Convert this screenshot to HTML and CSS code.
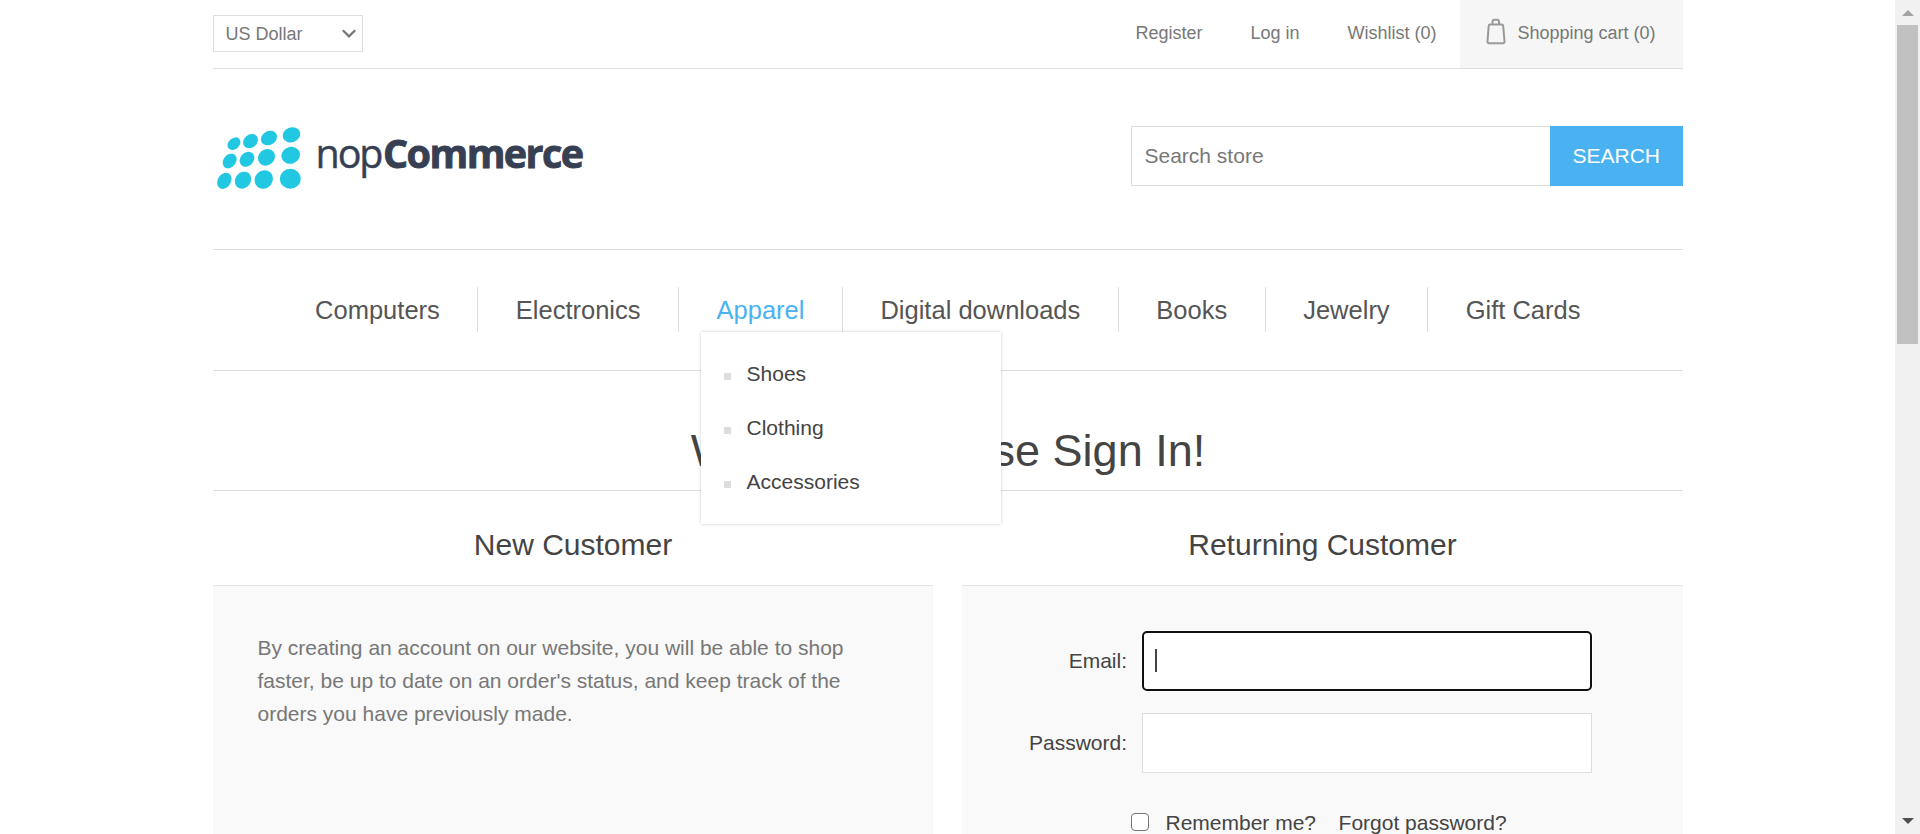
FILE: index.html
```html
<!DOCTYPE html>
<html lang="en">
<head>
<meta charset="utf-8">
<title>nopCommerce demo store. Login</title>
<link rel="stylesheet" href="styles.css">
</head>
<body>
<div class="viewport">
  <div class="page">
    <header class="topbar">
      <div class="currency">US Dollar
        <svg class="chevron" viewBox="0 0 14 9"><path d="M.8 1.200 7 7.400l6.200-6.200" fill="none" stroke="#767676" stroke-width="2.200"/></svg>
      </div>
      <nav class="links">
        <a>Register</a><a>Log in</a><a>Wishlist (0)</a>
        <a class="cart"><svg class="bag" viewBox="0 0 20 27"><path d="M6.500 6V4Q6.500 1.800 8.500 1.800h2.500Q13 1.800 13 4V6M4 6.500h11.500Q17 6.500 17.200 8L18.500 23.300Q18.700 25.200 17 25.200h-14Q1.300 25.200 1.500 23.300L2.700 8Q2.800 6.500 4 6.500Z" fill="none" stroke="#999" stroke-width="2"/></svg>Shopping cart (0)</a>
      </nav>
    </header>
    <div class="masthead">
      <svg class="logo" viewBox="0 0 375 75">
        <g fill="#22c8e2">
          <ellipse cx="24" cy="23.700" rx="7.200" ry="5.500" transform="translate(-3 0) rotate(-43 24 23.700)"/>
          <ellipse cx="37.500" cy="21.200" rx="8" ry="6.500" transform="rotate(-40 37.500 21.200)"/>
          <ellipse cx="56" cy="18" rx="8.500" ry="6.800" transform="rotate(-30 56 18)"/>
          <ellipse cx="78.500" cy="14.800" rx="9" ry="7.400" transform="rotate(-20 78.500 14.800)"/>
          <ellipse cx="16.700" cy="41" rx="8" ry="6.200" transform="rotate(-50 16.700 41)"/>
          <ellipse cx="34" cy="39.300" rx="8.200" ry="6.700" transform="rotate(-47 34 39.300)"/>
          <ellipse cx="53.500" cy="37.300" rx="9" ry="7.900" transform="rotate(-40 53.500 37.300)"/>
          <ellipse cx="77.700" cy="35.300" rx="9.500" ry="8.400" transform="rotate(-20 77.700 35.300)"/>
          <ellipse cx="11.300" cy="60.800" rx="8.600" ry="6.600" transform="rotate(-57 11.300 60.800)"/>
          <ellipse cx="30" cy="60.200" rx="9" ry="7.700" transform="rotate(-52 30 60.200)"/>
          <ellipse cx="50.800" cy="59.500" rx="9.600" ry="8.800" transform="rotate(-48 50.800 59.500)"/>
          <ellipse cx="77.300" cy="58.800" rx="10.500" ry="10"/>
        </g>
        <text class="logo-text" x="102.500" y="48.200" textLength="68" lengthAdjust="spacing">nop</text>
        <text class="logo-text strong" x="170" y="48" textLength="201" lengthAdjust="spacing">Commerce</text>
      </svg>
      <div class="search"><div class="search-field">Search store</div><div class="search-button">SEARCH</div></div>
    </div>
    <nav class="menu">
      <a>Computers</a><a>Electronics</a>
      <div class="menu-item active">Apparel
        <ul class="submenu"><li>Shoes</li><li>Clothing</li><li>Accessories</li></ul>
      </div>
      <a>Digital downloads</a><a>Books</a><a>Jewelry</a><a>Gift Cards</a>
    </nav>
    <h1 class="title">Welcome, Please Sign In!</h1>
    <main class="columns">
      <section class="column">
        <h2>New Customer</h2>
        <div class="panel info">By creating an account on our website, you will be able to shop faster, be up to date on an order's status, and keep track of the orders you have previously made.</div>
      </section>
      <section class="column">
        <h2>Returning Customer</h2>
        <div class="panel form">
          <div class="row"><label>Email:</label><div class="field focused"><span class="caret"></span></div></div>
          <div class="row"><label>Password:</label><div class="field"></div></div>
          <div class="options"><span class="checkbox"></span><span class="remember">Remember me?</span><a>Forgot password?</a></div>
        </div>
      </section>
    </main>
  </div>
  <div class="scrollbar">
    <svg class="arrow" viewBox="0 0 12 6"><path d="M6 0 12 6H0Z" fill="#a3a3a3"/></svg>
    <div class="thumb"></div>
    <svg class="arrow down" viewBox="0 0 12 6"><path d="M0 0h12L6 6Z" fill="#505050"/></svg>
  </div>
</div>
</body>
</html>
```
FILE: styles.css
```css
* { box-sizing: border-box; }
body { margin: 0; background: #fff; font-family: "Liberation Sans", Arial, sans-serif; font-size: 21px; color: #444; }
.viewport { display: flex; justify-content: space-between; height: 834px; overflow: hidden; }
.page { width: 1470px; margin-left: 213px; }

.topbar { display: flex; justify-content: space-between; height: 69px; border-bottom: 1px solid #ddd; font-size: 18px; color: #777; }
.currency { display: flex; align-items: center; justify-content: space-between; width: 150px; height: 37px; margin-top: 15px; padding: 1px 6px 0 11.500px; border: 1px solid #ddd; }
.chevron { width: 14px; height: 9px; margin-top: -2px; }
.links { display: flex; line-height: 66px; gap: 48px; white-space: nowrap; }
.links a:not(.cart) { margin-left: -1px; margin-right: 1px; }
.links .cart { display: flex; width: 223px; height: 68px; margin-left: -25.500px; padding-left: 26px; background: #f6f6f6; }
.bag { width: 20px; height: 27px; margin: 18px 11.500px 0 0; }

.masthead { display: flex; justify-content: space-between; height: 181px; padding-top: 57px; border-bottom: 1px solid #ddd; }
.logo { width: 375px; height: 75px; margin-top: -6px; }
.logo-text { font-family: "Open Sans", sans-serif; font-size: 39.500px; fill: #364052; stroke: #364052; stroke-width: .4px; }
.logo-text.strong { font-weight: 700; stroke-width: .9px; }
.search { display: flex; width: 552px; height: 60px; line-height: 58px; }
.search-field { flex: 1; padding-left: 12.500px; border: 1px solid #ddd; border-right: 0; color: #777; }
.search-button { width: 133px; padding-right: .5px; line-height: 60px; text-align: center; color: #fff; background: #4ab2f1; }

.menu { display: flex; justify-content: center; height: 121px; padding: 37px .5px 0 0; border-bottom: 1px solid #ddd; font-size: 25.500px; line-height: 46px; color: #555; white-space: nowrap; }
.menu > * { height: 45px; padding: 0 37.500px; border-left: 1px solid #ddd; }
.menu > :first-child { border-left: 0; }
.menu-item { position: relative; }
.menu > .active { color: #4ab2f1; }
.submenu { position: absolute; z-index: 2; left: 22px; top: 45px; width: 300px; height: 192px; margin: 0; padding: 15px 0 0 23px; list-style: none; background: #fff; box-shadow: 0 0 3px rgba(0, 0, 0, .22); font-size: 21px; line-height: 54px; color: #444; }
.submenu li { display: flex; align-items: center; gap: 15.500px; height: 54px; }
.submenu li::before { content: ""; width: 7px; height: 7px; margin-top: 5px; background: #ddd; }

.title { height: 120px; margin: 0; padding-top: 54px; border-bottom: 1px solid #ddd; font-size: 45px; font-weight: 400; line-height: 52px; text-align: center; }
.columns { display: grid; grid-template-columns: 720px 721px; justify-content: space-between; }
.column h2 { height: 94px; margin: 0; padding-top: 36px; font-size: 30px; font-weight: 400; line-height: 35px; text-align: center; }
.panel { height: 420px; border-top: 1px solid #e4e4e4; background: #f9f9f9; }
.info { padding: 45px 75px 0 44.500px; line-height: 33px; color: #777; }
.form { padding-top: 45px; }
.row { display: flex; align-items: center; height: 60px; margin-bottom: 22px; }
.row label { width: 165px; margin-right: 15px; text-align: right; }
.field { display: flex; align-items: center; width: 450px; height: 60px; padding-left: 12px; border: 1px solid #ddd; background: #fff; }
.focused { border: 2.500px solid #101010; border-radius: 5px; padding-left: 11px; box-shadow: 0 0 0 1px #fff; }
.caret { width: 2px; height: 23px; margin-top: -2px; background: #444; }
.options { display: flex; align-items: center; height: 24px; margin-top: 38px; padding-left: 169px; white-space: nowrap; }
.checkbox { width: 18px; height: 18px; margin: -2px 16.500px 0 0; border: 1.500px solid #767676; border-radius: 4px; background: #fff; }
.remember { margin-right: 22.500px; }

.scrollbar { display: flex; flex-direction: column; align-items: center; width: 25px; height: 834px; padding: 10px 0; background: #f1f1f1; }
.arrow { width: 12px; height: 6px; }
.thumb { width: 21px; height: 319px; margin-top: 9px; background: #c1c1c1; }
.down { margin-top: auto; }
```
